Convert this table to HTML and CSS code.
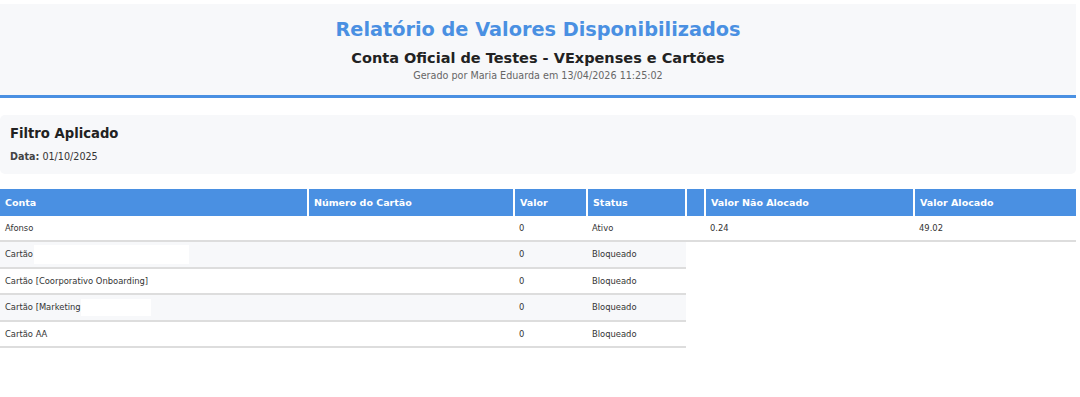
FILE: index.html
```html
<!DOCTYPE html>
<html lang="pt-BR">
<head>
<meta charset="utf-8">
<title>Relatório de Valores Disponibilizados</title>
<link rel="stylesheet" href="styles.css">
</head>
<body>
<header class="report-header">
  <h1 class="title">Relatório de Valores Disponibilizados</h1>
  <h2 class="subtitle">Conta Oficial de Testes - VExpenses e Cartões</h2>
  <p class="generated">Gerado por Maria Eduarda em 13/04/2026 11:25:02</p>
</header>

<section class="filter">
  <h3 class="filter-title">Filtro Aplicado</h3>
  <p class="filter-line"><strong>Data:</strong> 01/10/2025</p>
</section>

<table class="data">
  <thead>
    <tr>
      <th class="c-conta">Conta</th>
      <th class="c-num">Número do Cartão</th>
      <th class="c-valor">Valor</th>
      <th class="c-status">Status</th>
      <th class="c-empty"></th>
      <th class="c-nao">Valor Não Alocado</th>
      <th class="c-aloc">Valor Alocado</th>
    </tr>
  </thead>
  <tbody>
    <tr class="first">
      <td>Afonso</td><td></td><td>0</td><td>Ativo</td><td></td><td>0.24</td><td>49.02</td>
    </tr>
    <tr class="alt">
      <td>Cartão<span class="redact r1"></span></td><td></td><td>0</td><td>Bloqueado</td>
    </tr>
    <tr>
      <td>Cartão [Coorporativo Onboarding]</td><td></td><td>0</td><td>Bloqueado</td>
    </tr>
    <tr class="alt">
      <td>Cartão [Marketing<span class="redact r2"></span></td><td></td><td>0</td><td>Bloqueado</td>
    </tr>
    <tr>
      <td>Cartão AA</td><td></td><td>0</td><td>Bloqueado</td>
    </tr>
  </tbody>
</table>
</body>
</html>
```

FILE: styles.css
```css
html, body {
  background: #ffffff;
}
body {
  margin: 4px 4px 0 0;
  font-family: "DejaVu Sans", Verdana, sans-serif;
  color: #333333;
}

.report-header {
  background: #f7f8fa;
  border-bottom: 3px solid #4a90e2;
  height: 91px;
  box-sizing: content-box;
  display: flex;
  flex-direction: column;
  align-items: center;
}
.title {
  margin: 13px 0 0 0;
  font-size: 19.3px;
  line-height: 26px;
  font-weight: bold;
  color: #4a90e2;
}
.subtitle {
  margin: 5px 0 0 0;
  font-size: 14.5px;
  line-height: 20px;
  font-weight: bold;
  color: #222222;
}
.generated {
  margin: 1px 0 0 0;
  font-size: 9.6px;
  line-height: 14px;
  color: #666666;
}

.filter {
  margin-top: 17px;
  background: #f7f8fa;
  border-radius: 5px;
  height: 59px;
  padding: 0 10px;
  display: flex;
  flex-direction: column;
}
.filter-title {
  margin: 9px 0 0 0;
  font-size: 13.2px;
  line-height: 20px;
  font-weight: bold;
  color: #222222;
}
.filter-line {
  margin: 6px 0 0 0;
  font-size: 9.6px;
  line-height: 14px;
  color: #333333;
}
.filter-line strong {
  color: #444444;
}

.data {
  margin-top: 15px;
  width: 100%;
  table-layout: fixed;
  border-collapse: collapse;
  font-size: 8.4px;
}
.data th {
  background: #4a90e2;
  color: #ffffff;
  font-size: 9.5px;
  font-weight: bold;
  text-align: left;
  height: 27px;
  padding: 0 5px;
  border-right: 2px solid #ffffff;
  box-sizing: border-box;
}
.data th:last-child {
  border-right: 0;
}
.data td {
  height: 26.5px;
  padding: 0 5px;
  border-bottom: 2px solid #dddddd;
  box-sizing: border-box;
  color: #333333;
  vertical-align: middle;
  line-height: 12px;
  white-space: nowrap;
}
.data tr.first td {
  height: 25px;
}
.data tr.alt td {
  background: #f7f8fa;
}
.c-conta { width: 308px; }
.c-num { width: 206px; }
.c-valor { width: 73px; }
.c-status { width: 99px; }
.c-empty { width: 19px; }
.c-nao { width: 209px; }

.redact {
  display: inline-block;
  vertical-align: middle;
  background: #ffffff;
}
.r1 {
  width: 155px;
  height: 19px;
  margin-left: 1px;
}
.r2 {
  width: 70px;
  height: 17px;
}
```
